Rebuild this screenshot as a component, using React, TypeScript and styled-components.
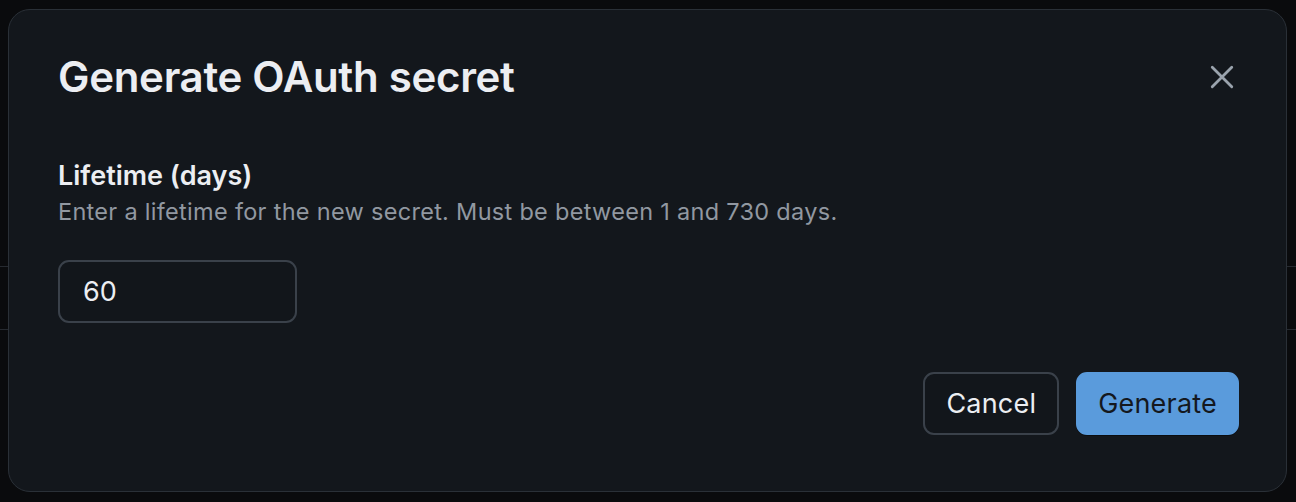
import styled, { createGlobalStyle } from 'styled-components';

const GlobalStyle = createGlobalStyle`
    html, body {
        margin: 0;
        padding: 0;
        background: #0a0b0d;
        font-family: Inter, "Liberation Sans", sans-serif;
        -webkit-font-smoothing: antialiased;
    }
`;

const Page = styled.div`
    position: relative;
    width: 1296px;
    height: 502px;
    overflow: hidden;
    background: #0a0b0d;
`;

// faint page content behind the modal backdrop
const BackdropRow = styled.div`
    position: absolute;
    left: 0;
    top: 266px;
    width: 1296px;
    height: 62px;
    border-top: 1px solid #262a30;
    border-bottom: 1px solid #262a30;
`;

const Dialog = styled.div`
    position: absolute;
    left: 8px;
    top: 9px;
    width: 1279px;
    height: 483px;
    box-sizing: border-box;
    background: #13171c;
    border: 1.5px solid #2a3037;
    border-radius: 22px;
    padding: 39px 47px 0 49px;
    display: flex;
    flex-direction: column;
    color: #eef0f3;
`;

const Header = styled.div`
    display: flex;
    align-items: flex-start;
    justify-content: space-between;
`;

const Title = styled.h1`
    margin: 0;
    font-size: 42px;
    font-weight: 600;
    line-height: 55px;
    letter-spacing: -0.3px;
    color: #eceef2;
`;

const CloseButton = styled.button`
    width: 40px;
    height: 40px;
    margin-top: 8px;
    margin-right: -3px;
    padding: 0;
    border: none;
    background: transparent;
    display: flex;
    align-items: center;
    justify-content: center;
    color: #9aa3ad;
`;

const Body = styled.div`
    display: flex;
    flex-direction: column;
    margin-top: 52px;
`;

const Label = styled.label`
    font-size: 27px;
    font-weight: 600;
    line-height: 40px;
    color: #eceef2;
`;

const Hint = styled.div`
    font-size: 23.5px;
    line-height: 32px;
    letter-spacing: 0.3px;
    color: #9198a1;
`;

const NumberInput = styled.input`
    margin-top: 32px;
    width: 239px;
    height: 63px;
    box-sizing: border-box;
    background: #12161b;
    border: 2px solid #3a414a;
    border-radius: 11px;
    padding: 0 23px;
    font-family: Inter, "Liberation Sans", sans-serif;
    font-size: 27px;
    color: #eceef2;
    outline: none;
`;

const Footer = styled.div`
    display: flex;
    justify-content: flex-end;
    gap: 17px;
    margin-top: 49px;
`;

const Button = styled.button<{ primary?: boolean }>`
    height: 63px;
    box-sizing: border-box;
    padding: 0 ${p => (p.primary ? '20px' : '21px')};
    border-radius: 11px;
    border: 2px solid ${p => (p.primary ? '#5a9bdc' : '#3a414a')};
    background: ${p => (p.primary ? '#5a9bdc' : '#12161b')};
    color: ${p => (p.primary ? '#14181e' : '#eceef2')};
    font-family: Inter, "Liberation Sans", sans-serif;
    font-size: 27px;
    font-weight: 400;
    letter-spacing: 0.2px;
    box-shadow: ${p => (p.primary ? '0 1px 0 rgba(0,0,0,.4)' : 'none')};
`;

function App() {
    return (
        <Page>
            <GlobalStyle />
            <BackdropRow />
            <Dialog>
                <Header>
                    <Title>Generate OAuth secret</Title>
                    <CloseButton aria-label="Close">
                        <svg width="26" height="26" viewBox="0 0 24 24" fill="none">
                            <path
                                d="M3 3 L21 21 M21 3 L3 21"
                                stroke="currentColor"
                                strokeWidth="2.6"
                                strokeLinecap="round"
                            />
                        </svg>
                    </CloseButton>
                </Header>
                <Body>
                    <Label>Lifetime (days)</Label>
                    <Hint>Enter a lifetime for the new secret. Must be between 1 and 730 days.</Hint>
                    <NumberInput defaultValue="60" />
                </Body>
                <Footer>
                    <Button>Cancel</Button>
                    <Button primary>Generate</Button>
                </Footer>
            </Dialog>
        </Page>
    );
}

export default App;
